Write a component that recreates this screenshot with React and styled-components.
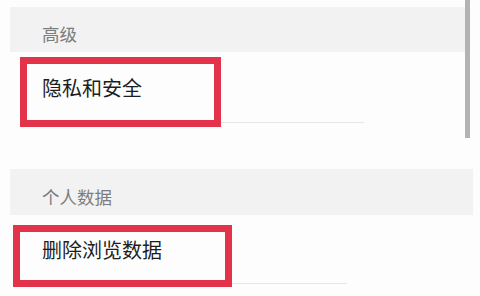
import React from 'react';
import styled, { createGlobalStyle } from 'styled-components';

const GlobalStyle = createGlobalStyle`
  body {
    margin: 0;
    background: #fdfdfd;
    font-family: "Noto Sans CJK SC", "Noto Sans", sans-serif;
  }
`;

const Screen = styled.div`
  position: relative;
  width: 480px;
  height: 296px;
  overflow: hidden;
  background: #fdfdfd;
  padding-top: 7px;
  box-sizing: border-box;
`;

const List = styled.div`
  display: flex;
  flex-direction: column;
  margin-left: 10px;
  width: 458px;
`;

const SectionHeader = styled.div`
  height: ${p => p.$height}px;
  box-sizing: border-box;
  display: flex;
  align-items: center;
  padding: 8px 0 0 32px;
  background: #f2f2f2;
  color: #7d7d7d;
  font-size: 17.5px;
  width: ${p => p.$wide ? 463 : 456}px;
`;

const Item = styled.div`
  position: relative;
  height: ${p => p.$height}px;
  display: flex;
  align-items: center;
  padding-left: 32px;
  color: #1e1e1e;
  font-size: 20px;
  margin-bottom: ${p => p.$after || 0}px;

  &::after {
    content: '';
    position: absolute;
    left: 32px;
    right: ${p => p.$lineRight}px;
    bottom: 0;
    height: 1px;
    background: #e6e6e6;
  }
`;

const Highlight = styled.div`
  position: absolute;
  left: ${p => p.$left}px;
  top: ${p => p.$top}px;
  width: ${p => p.$width}px;
  height: ${p => p.$height}px;
  box-sizing: border-box;
  border: 7px solid #e3334b;
`;

const Scrollbar = styled.div`
  position: absolute;
  left: 465px;
  top: 0;
  width: 5px;
  height: 138px;
  background: #b3b3b3;
`;

export default function App() {
  return (
    <>
      <GlobalStyle />
      <Screen>
        <List>
          <SectionHeader $height={45}>高级</SectionHeader>
          <Item $height={71} $lineRight={104} $after={46}>隐私和安全</Item>
          <SectionHeader $height={46} $wide>个人数据</SectionHeader>
          <Item $height={69} $lineRight={121}>删除浏览数据</Item>
        </List>
        <Highlight $left={20} $top={57} $width={201} $height={70} />
        <Highlight $left={13} $top={225} $width={219} $height={62} />
        <Scrollbar />
      </Screen>
    </>
  );
}
